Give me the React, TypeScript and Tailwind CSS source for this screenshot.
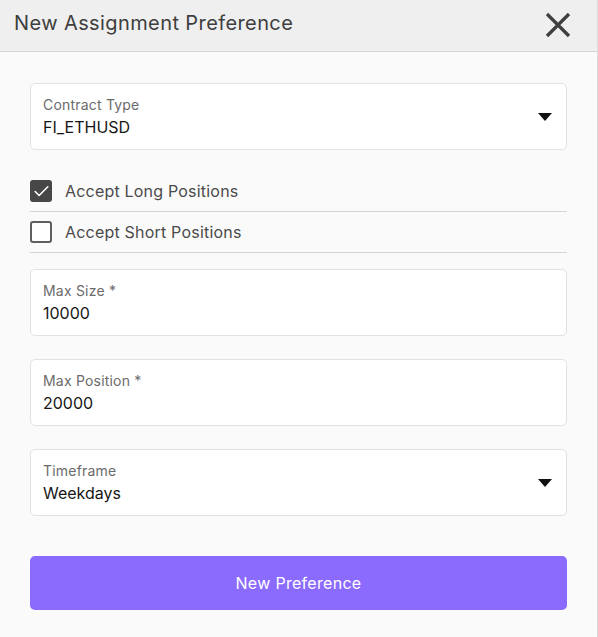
import { Check } from "lucide-react";

const Field = ({ label, value, select }: { label: string; value: string; select?: boolean }) => (
  <div className="flex h-[67px] items-center justify-between rounded-[5px] border border-[#e2e2e2] bg-white pl-[12px] pr-[14px]">
    <div className="flex flex-col">
      <span className="text-[14px] leading-[18px] text-[#6b6b6b] tracking-[0.2px]">{label}</span>
      <span className="mt-[3px] text-[16px] leading-[20px] text-[#161616]">{value}</span>
    </div>
    {select && (
      <svg width="14" height="8" viewBox="0 0 14 8">
        <path d="M0 0h14L7 8z" fill="#111" />
      </svg>
    )}
  </div>
);

const CheckRow = ({ label, checked }: { label: string; checked?: boolean }) => (
  <div className="flex h-[41px] items-center gap-[13px] border-b border-[#d4d4d4]">
    {checked ? (
      <div className="flex size-[22px] items-center justify-center rounded-[3px] bg-[#474747]">
        <Check size={19} strokeWidth={2} color="#fff" />
      </div>
    ) : (
      <div className="size-[22px] rounded-[3px] border-2 border-[#5f5f5f] bg-white" />
    )}
    <span className="text-[16px] text-[#4a4a4a] tracking-[0.2px]">{label}</span>
  </div>
);

export default function App() {
  return (
    <div
      className="flex h-[637px] w-[598px] flex-col border-r border-[#dcdcdc] bg-[#fafafa]"
      style={{ fontFamily: "'Inter', 'Liberation Sans', sans-serif" }}
    >
      <div className="flex h-[52px] items-center justify-between border-b border-[#d4d4d4] bg-[#efefef] pl-[14px] pr-[26px]">
        <h1 className="mb-[5px] text-[20px] font-normal text-[#3e3e3e] tracking-[0.4px]">New Assignment Preference</h1>
        <svg width="26" height="26" viewBox="0 0 26 26" className="mb-[2px]">
          <path d="M2 2L24 24M24 2L2 24" stroke="#3f3f3f" strokeWidth="3.2" />
        </svg>
      </div>
      <div className="flex flex-col px-[30px] pt-[31px]">
        <Field label="Contract Type" value="FI_ETHUSD" select />
        <div className="mt-[21px] flex flex-col">
          <CheckRow label="Accept Long Positions" checked />
          <CheckRow label="Accept Short Positions" />
        </div>
        <div className="mt-[16px] flex flex-col gap-[23px]">
          <Field label="Max Size *" value="10000" />
          <Field label="Max Position *" value="20000" />
          <Field label="Timeframe" value="Weekdays" select />
        </div>
        <button className="mt-[40px] h-[54px] rounded-[5px] bg-[#8b6afe] text-[16px] tracking-[0.3px] text-white">
          New Preference
        </button>
      </div>
    </div>
  );
}
